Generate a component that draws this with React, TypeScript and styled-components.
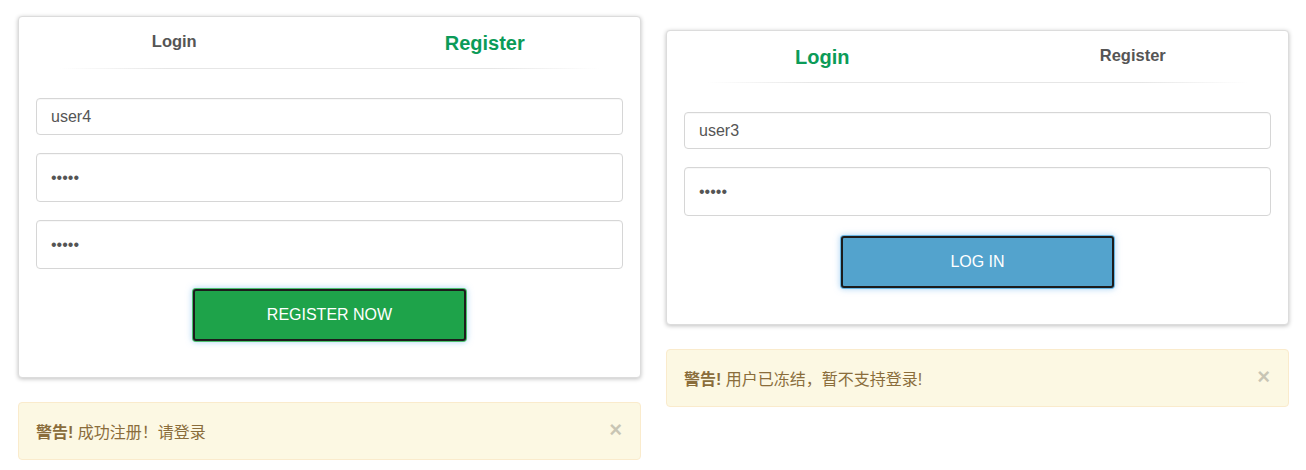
import React from 'react';
import styled, { createGlobalStyle } from 'styled-components';

const GlobalStyle = createGlobalStyle`
  body {
    margin: 0;
    background: #fff;
    font-family: 'Liberation Sans', 'Noto Sans CJK SC', Arial, sans-serif;
    color: #555;
  }
`;

const Page = styled.div`
  display: grid;
  grid-template-columns: 623px 623px;
  column-gap: 25px;
  padding-left: 18px;
  align-items: start;
`;

interface ColumnProps {
  top: number;
}

const Column = styled.div<ColumnProps>`
  display: flex;
  flex-direction: column;
  gap: 24px;
  padding-top: ${({ top }) => top}px;
`;

const Card = styled.section`
  background: #fff;
  border: 1px solid #dcdcdc;
  border-radius: 4px;
  box-shadow: 0 1px 4px rgba(0, 0, 0, 0.25);
  padding-bottom: 36px;
`;

const Tabs = styled.div`
  display: grid;
  grid-template-columns: 1fr 1fr;
  height: 51px;
  align-items: start;
`;

interface TabProps {
  active?: boolean;
}

const Tab = styled.div<TabProps>`
  text-align: center;
  font-weight: bold;
  padding-top: ${({ active }) => (active ? 14 : 15)}px;
  font-size: ${({ active }) => (active ? '20px' : '16.5px')};
  line-height: ${({ active }) => (active ? '24px' : '18px')};
  color: ${({ active }) => (active ? '#0b9b58' : '#555')};
`;

const Divider = styled.div`
  height: 1px;
  margin: 0 40px;
  background: linear-gradient(to right, rgba(230, 230, 230, 0), #e6e6e6 20%, #e6e6e6 80%, rgba(230, 230, 230, 0));
`;

const Form = styled.form`
  display: flex;
  flex-direction: column;
  gap: 18px;
  padding: 29px 17px 0;
`;

interface FieldProps {
  tall?: boolean;
}

const Field = styled.input<FieldProps>`
  box-sizing: border-box;
  width: 100%;
  height: ${({ tall }) => (tall ? 49 : 37)}px;
  border: 1px solid #d6d6d6;
  border-radius: 4px;
  padding: 0 14px;
  font-family: 'Liberation Sans', Arial, sans-serif;
  font-size: 16px;
  color: #555;
  background: #fff;
  outline: none;
  box-shadow: inset 0 1px 1px rgba(0, 0, 0, 0.03);
`;

interface SubmitProps {
  tone: string;
  ring: string;
}

const Submit = styled.button<SubmitProps>`
  align-self: center;
  box-sizing: border-box;
  width: 273px;
  height: 52px;
  margin-top: 2px;
  border: 2px solid #1c1c1c;
  border-radius: 3px;
  background: ${({ tone }) => tone};
  color: #fff;
  font-family: 'Liberation Sans', Arial, sans-serif;
  font-size: 16px;
  text-transform: uppercase;
  box-shadow: 0 0 0 1px ${({ ring }) => ring}, 0 0 6px 1px rgba(102, 175, 233, 0.55);
  cursor: pointer;
`;

const Alert = styled.div`
  box-sizing: border-box;
  height: 58px;
  display: flex;
  align-items: center;
  justify-content: space-between;
  padding: 0 17px;
  background: #fcf8e3;
  border: 1px solid #faebcc;
  border-radius: 4px;
  color: #8a6d3b;
  font-size: 16px;
`;

const AlertText = styled.span`
  strong {
    font-weight: bold;
  }
`;

const Close = styled.span`
  font-family: 'Liberation Sans', Arial, sans-serif;
  font-size: 22px;
  font-weight: bold;
  color: #000;
  opacity: 0.2;
  line-height: 1;
  margin-top: -2px;
  margin-right: 1px;
`;

interface PanelProps {
  mode: 'login' | 'register';
  user: string;
  message: string;
  top: number;
}

const Panel = ({ mode, user, message, top }: PanelProps): JSX.Element => {
  const isRegister = mode === 'register';
  return (
    <Column top={top}>
      <Card>
        <Tabs>
          <Tab active={!isRegister}>Login</Tab>
          <Tab active={isRegister}>Register</Tab>
        </Tabs>
        <Divider />
        <Form onSubmit={(e) => e.preventDefault()}>
          <Field type="text" defaultValue={user} />
          <Field tall type="password" defaultValue="12345" />
          {isRegister && <Field tall type="password" defaultValue="12345" />}
          {isRegister ? (
            <Submit tone="#1ea34a" ring="#4cc06e">
              Register now
            </Submit>
          ) : (
            <Submit tone="#53a3cd" ring="#6cb7e3">
              Log in
            </Submit>
          )}
        </Form>
      </Card>
      <Alert>
        <AlertText>
          <strong>警告!</strong> {message}
        </AlertText>
        <Close>×</Close>
      </Alert>
    </Column>
  );
};

function App(): JSX.Element {
  return (
    <>
      <GlobalStyle />
      <Page>
        <Panel mode="register" user="user4" message="成功注册！请登录" top={16} />
        <Panel mode="login" user="user3" message="用户已冻结，暂不支持登录!" top={30} />
      </Page>
    </>
  );
}

export default App;
